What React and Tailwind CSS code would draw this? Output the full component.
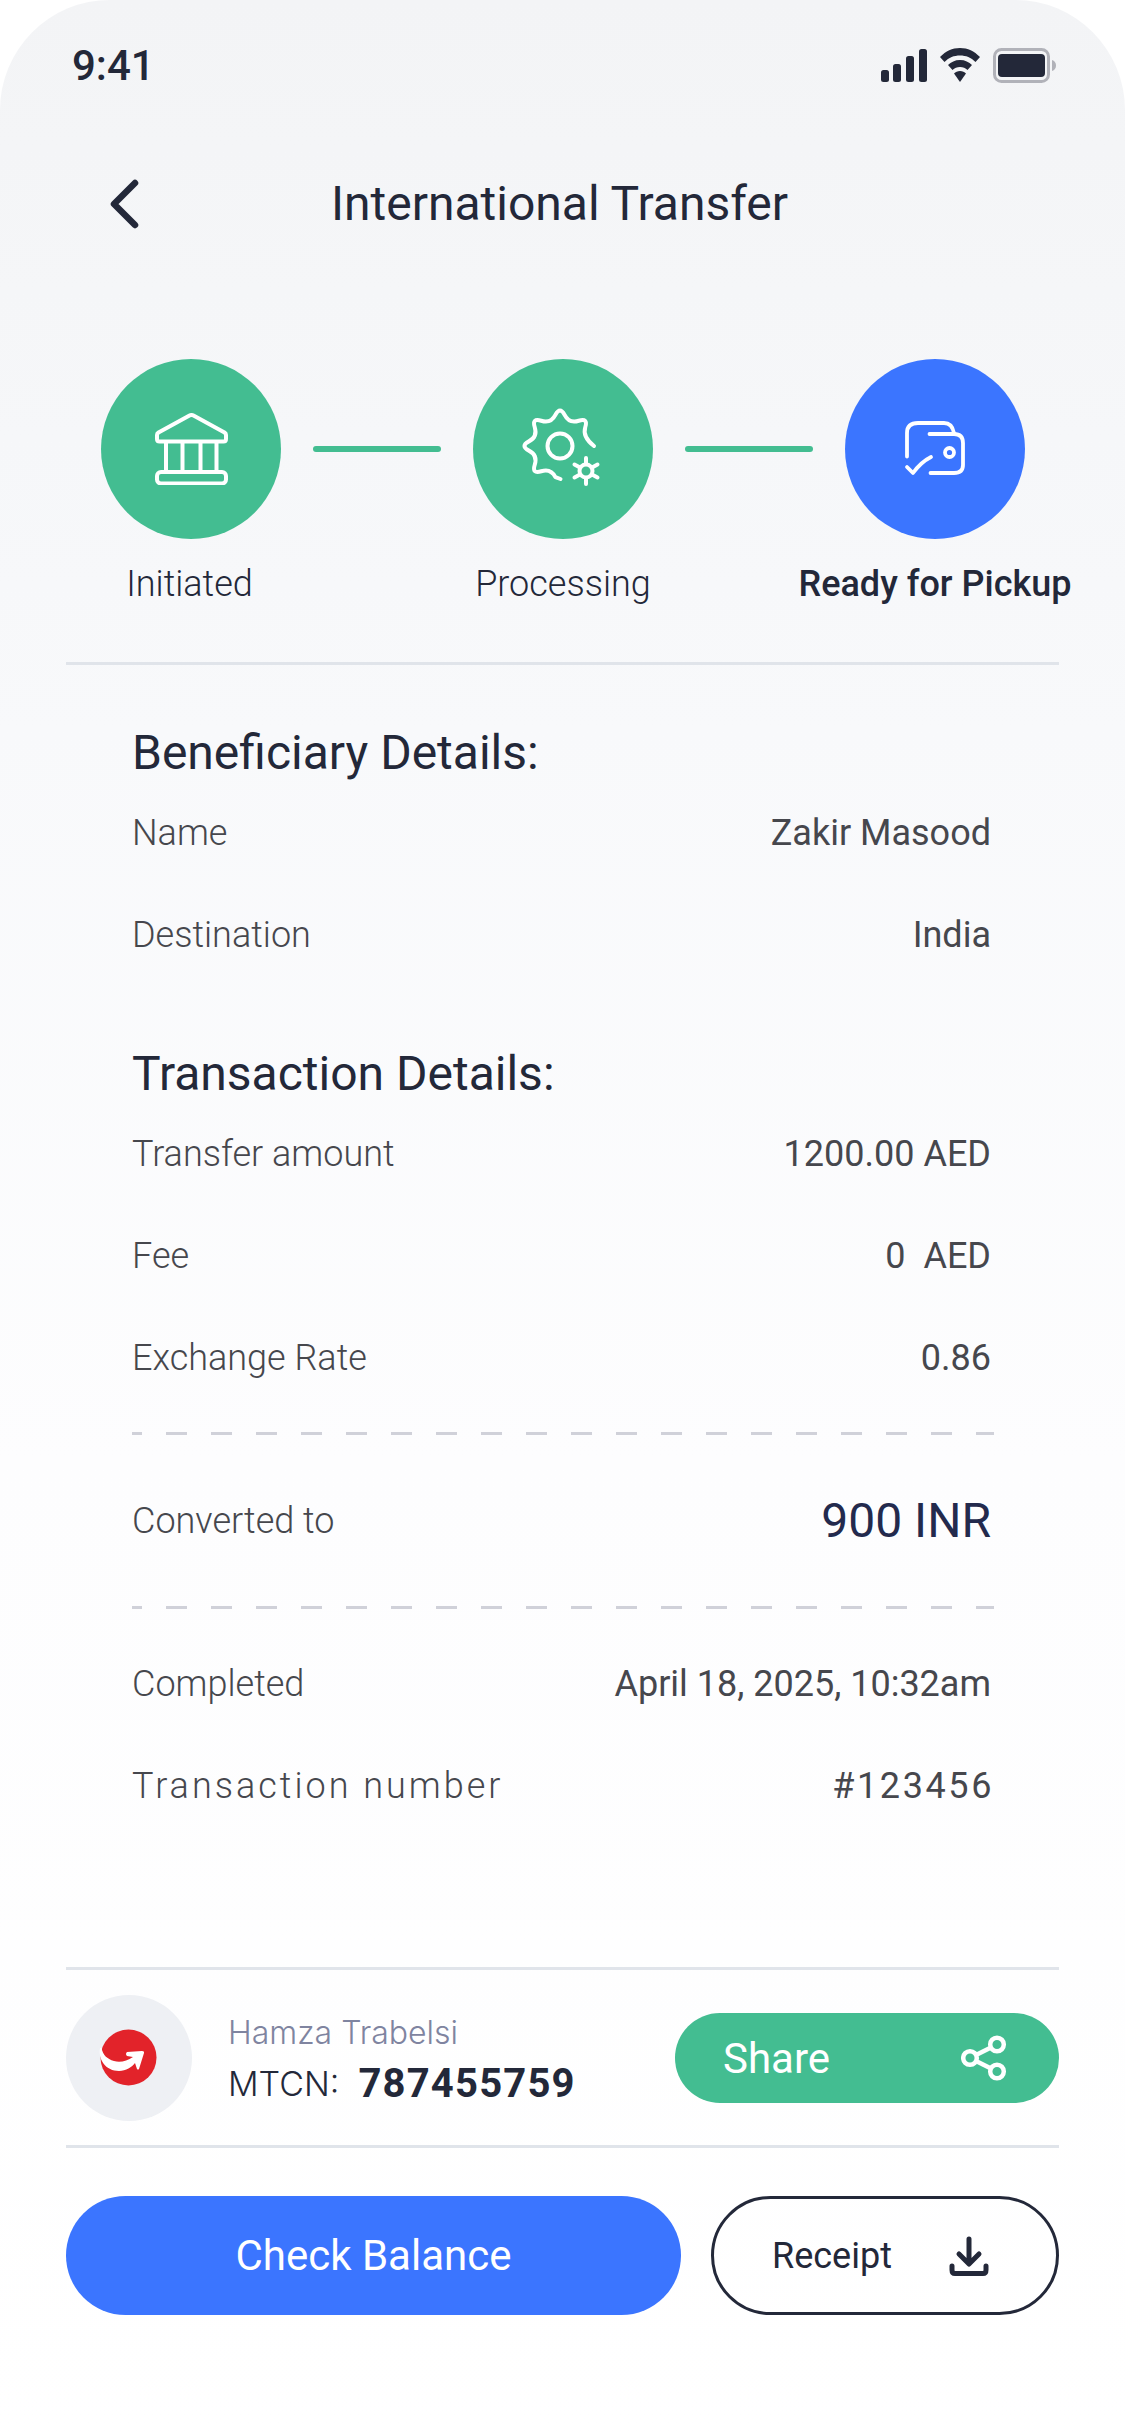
function BackIcon() {
  return (
    <svg width="30" height="50" viewBox="0 0 30 50" fill="none" stroke="#232839" strokeWidth="6.5" strokeLinecap="round" strokeLinejoin="round">
      <path d="M26 4 L5 25 L26 46" />
    </svg>
  );
}

function StatusIcons() {
  return (
    <div className="flex items-center gap-[13px]">
      <svg width="46" height="33" viewBox="0 0 46 33" fill="#232839">
        <rect x="0" y="21" width="8" height="12" rx="2.500" />
        <rect x="12" y="15" width="8" height="18" rx="2.500" />
        <rect x="25" y="7" width="8" height="26" rx="2.500" />
        <rect x="38" y="0" width="8" height="33" rx="2.500" />
      </svg>
      <svg width="40" height="34" viewBox="0 0 40 34" fill="#232839">
        <path d="M20 0C12 0 6 3 0 9l4.500 5C9 9.500 14 7.500 20 7.500S31 9.500 35.500 14L40 9C34 3 28 0 20 0Z" />
        <path d="M20 12c-5 0-9 2-12 5l4.500 5c2-2 4.500-3 7.500-3s5.500 1 7.500 3l4.500-5c-3-3-7-5-12-5Z" />
        <path d="M20 23c-2.500 0-4.500 1-6 2.500L20 34l6-8.500C24.500 24 22.500 23 20 23Z" />
      </svg>
      <svg width="64" height="35" viewBox="0 0 64 35" fill="none">
        <rect x="1.500" y="1.500" width="54" height="32" rx="7" stroke="#b1b2b9" strokeWidth="3" />
        <rect x="5" y="6" width="47" height="23" rx="4" fill="#232839" />
        <path d="M59 12c2.500 .8 4 2.800 4 5.500s-1.500 4.700-4 5.500Z" fill="#b1b2b9" />
      </svg>
    </div>
  );
}

function BankIcon() {
  return (
    <svg width="73" height="72" viewBox="0 0 73 72" fill="none" stroke="#fff" strokeWidth="4" strokeLinejoin="round" strokeLinecap="round">
      <path d="M34.500 2.500 L3.500 19.500 Q2 20.500 2 22 V26 Q2 28.500 4.500 28.500 H68.500 Q71 28.500 71 26 V22 Q71 20.500 69.500 19.500 L38.500 2.500 Q36.500 1.500 34.500 2.500 Z" />
      <rect x="2" y="59" width="69" height="11.500" rx="4" />
      <path d="M11 29 V59 M27.500 29 V59 M45.500 29 V59 M61.500 29 V59" />
    </svg>
  );
}

function GearIcon() {
  return (
    <svg width="105" height="90" viewBox="0 4 105 90" fill="none" stroke="#fff" strokeWidth="4" strokeLinejoin="round" strokeLinecap="round">
      <path d="M83 46 Q71.200 36.800 74.250 27.250 Q77.300 17.700 67.750 20.750 Q58.200 23.800 53.600 14.900 Q49 6 44.400 14.900 Q39.800 23.800 30.250 20.750 Q20.700 17.700 23.750 27.250 Q26.800 36.800 17.900 41.400 Q9 46 17.900 50.600 Q26.800 55.200 23.750 64.750 Q20.700 74.300 30.250 71.250 Q39.800 68.200 44.400 77.100 L49.500 79" />
      <circle cx="49" cy="46" r="12.500" />
      <circle cx="75" cy="71" r="6.500" />
      <path d="M75 58 V64 M75 78 V84 M63.500 64.500 L69 67.500 M81 74.500 L86.500 77.500 M86.500 64.500 L81 67.500 M69 74.500 L63.500 77.500" />
    </svg>
  );
}

function WalletCheckIcon() {
  return (
    <svg width="80" height="80" viewBox="4 4 80 80" fill="none" stroke="#fff" strokeWidth="3.800" strokeLinejoin="round" strokeLinecap="round">
      <path d="M16 51.500 V28 Q16 18 27 18 H53 Q61 18 63 28" />
      <path d="M38.500 29 H63 Q72 29 72 38 V60 Q72 68 63 68 H39.500" />
      <circle cx="58.500" cy="47.500" r="4.500" />
      <path d="M16 62 L22 68 Q30 57 40 52" />
    </svg>
  );
}

function ShareIcon() {
  return (
    <svg width="46" height="46" viewBox="0 0 46 46" fill="none" stroke="#fff" strokeWidth="4.500">
      <circle cx="9" cy="23" r="6.800" />
      <circle cx="36" cy="9.500" r="6.800" />
      <circle cx="36" cy="36.500" r="6.800" />
      <path d="M15 20 L30 12.500 M15 26 L30 33.500" />
    </svg>
  );
}

function DownloadIcon() {
  return (
    <svg width="40" height="40" viewBox="0 0 40 40" fill="none" stroke="#232839" strokeWidth="5" strokeLinecap="round" strokeLinejoin="round">
      <path d="M20 3 V27 M10 18 L20 28 L30 18" />
      <path d="M3 30 V34 Q3 37.500 6 37.500 H34 Q37 37.500 37 34 V30" />
    </svg>
  );
}

function MoneyLogo() {
  return (
    <svg width="80" height="70" viewBox="0 -3 80 70">
      <circle cx="39.500" cy="31.500" r="28" fill="#e2232a" />
      <path d="M11 22 C9 34 17 45 30 45 C37 45 43 41 46 37 L48 43 Q49 44 50 43 L55 27 Q55.500 25 53 25 L38 26 Q36 28 38 30 L44 31 C38 35 31 37 25 35 C18 33 14 29 12.500 22 Z" fill="#fff" />
    </svg>
  );
}

function Step({ icon, label, color, bold, shift }) {
  return (
    <div className="flex flex-col items-center w-[180px] shrink-0">
      <div className={`w-[180px] h-[180px] rounded-full flex items-center justify-center ${color}`}>{icon}</div>
      <div className={`mt-[25px] leading-[40px] text-[36px] whitespace-nowrap text-[#232839] ${bold ? "font-medium" : "font-light"} ${shift ? "pr-[3px]" : ""}`}>{label}</div>
    </div>
  );
}

function Row({ label, value, wide }) {
  return (
    <div className={`flex items-center justify-between h-[102px] text-[36px] ${wide ? "tracking-[3px]" : ""}`}>
      <span className="font-light text-[#46474d]">{label}</span>
      <span className={`text-[#46474d] whitespace-pre ${wide ? "tracking-[2.6px] -mr-[3px]" : ""}`}>{value}</span>
    </div>
  );
}

function Dashed() {
  return <div className="h-[3px] -mr-[3px] bg-[repeating-linear-gradient(90deg,#d0d1d9_0,#d0d1d9_10px,transparent_10px,transparent_34px,#d0d1d9_34px,#d0d1d9_45px)]" />;
}

export default function App() {
  return (
    <div className="w-[1125px] h-[2436px] bg-white font-['Roboto',sans-serif] text-[#232839] overflow-hidden">
      <div className="h-full rounded-t-[110px] bg-[linear-gradient(180deg,#f3f4f6_0%,#f8f9fb_30%,#fdfdfe_60%,#ffffff_100%)]">
        {/* status bar */}
        <div className="flex items-center justify-between h-[130px] pl-[72px] pr-[68px]">
          <span className="text-[42px] font-medium">9:41</span>
          <StatusIcons />
        </div>

        {/* nav */}
        <div className="relative flex items-center justify-center h-[148px] pr-[6px]">
          <div className="absolute left-[109px] top-[49px]"><BackIcon /></div>
          <div className="text-[48px] leading-[148px]">International Transfer</div>
        </div>

        {/* progress */}
        <div className="mt-[81px] flex items-start pl-[101px]">
          <Step icon={<BankIcon />} label="Initiated" color="bg-[#43bd91]" shift />
          <div className="mt-[87px] ml-[32px] w-[128px] h-[6px] rounded-full bg-[#43bd91]" />
          <div className="ml-[32px]"><Step icon={<GearIcon />} label="Processing" color="bg-[#43bd91]" /></div>
          <div className="mt-[87px] ml-[32px] w-[128px] h-[6px] rounded-full bg-[#43bd91]" />
          <div className="ml-[32px]"><Step icon={<WalletCheckIcon />} label="Ready for Pickup" color="bg-[#3b75ff]" bold /></div>
        </div>

        <div className="mx-[66px] mt-[58px] h-[3px] bg-[#e0e4ea]" />

        {/* details */}
        <div className="pl-[132px] pr-[134px]">
          <h2 className="mt-[58px] text-[48px] leading-[60px] font-normal">Beneficiary Details:</h2>
          <div className="-mt-[1px]">
            <Row label="Name" value="Zakir Masood" />
            <Row label="Destination" value="India" />
          </div>
          <h2 className="mt-[58px] text-[48px] leading-[60px] font-normal">Transaction Details:</h2>
          <div className="-mt-[1px]">
            <Row label="Transfer amount" value="1200.00 AED" />
            <Row label="Fee" value="0  AED" />
            <Row label="Exchange Rate" value="0.86" />
          </div>
          <div className="mt-[23px]"><Dashed /></div>
          <div className="flex items-center justify-between h-[171px]">
            <span className="text-[36px] font-light text-[#46474d]">Converted to</span>
            <span className="text-[48px] text-[#232a4d]">900 INR</span>
          </div>
          <Dashed />
          <div className="mt-[24px]">
            <Row label="Completed" value="April 18, 2025, 10:32am" />
            <Row label="Transaction number" value="#123456" wide />
          </div>
        </div>

        <div className="mx-[66px] mt-[130px] h-[3px] bg-[#e0e4ea]" />

        {/* sender */}
        <div className="flex items-center justify-between mx-[66px] h-[175px]">
          <div className="flex items-center">
            <div className="w-[126px] h-[126px] rounded-full bg-[#eef0f4] flex items-center justify-center"><MoneyLogo /></div>
            <div className="ml-[36px] pt-[6px]">
              <div className="font-['Inter',sans-serif] font-light text-[32px] leading-[42px] text-[#7f84a0]">Hamza Trabelsi</div>
              <div className="flex items-center mt-[5px] leading-[50px]">
                <span className="font-['Inter',sans-serif] font-light text-[34px]">MTCN:</span>
                <span className="ml-[19px] text-[40px] font-bold tracking-[0.03em]">787455759</span>
              </div>
            </div>
          </div>
          <button className="w-[384px] h-[90px] rounded-full bg-[#43bd91] flex items-center justify-between pl-[48px] pr-[52px] text-white text-[42px]">
            <span className="pt-[2px]">Share</span>
            <ShareIcon />
          </button>
        </div>

        <div className="mx-[66px] h-[3px] bg-[#e0e4ea]" />

        {/* actions */}
        <div className="flex justify-between mx-[66px] mt-[48px]">
          <button className="w-[615px] h-[119px] rounded-full bg-[#3b75ff] text-white text-[42px]">Check Balance</button>
          <button className="w-[348px] h-[119px] rounded-full border-[3px] border-[#232839] flex items-center justify-between pl-[58px] pr-[67px] text-[36px]">
            Receipt
            <DownloadIcon />
          </button>
        </div>
      </div>
    </div>
  );
}
